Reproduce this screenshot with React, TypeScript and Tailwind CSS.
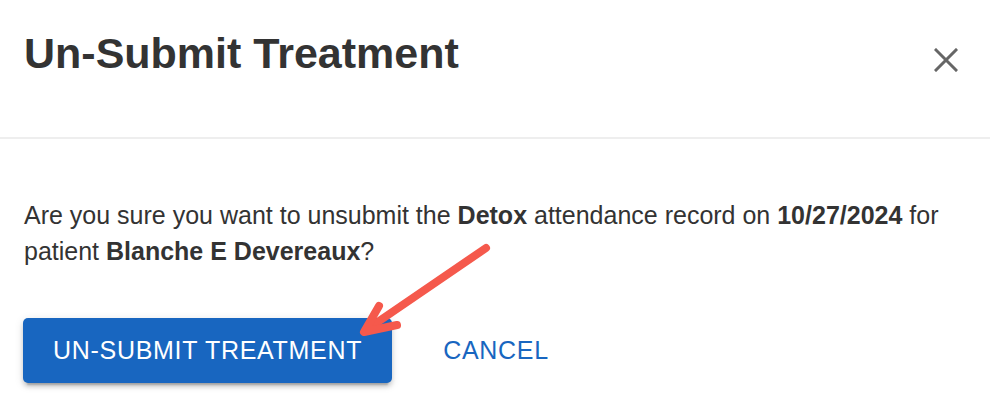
import React from "react";

export default function App() {
  return (
    <div className="relative w-[990px] h-[408px] overflow-hidden bg-white text-[#333333] font-['Liberation_Sans',Arial,sans-serif]">
      {/* Header */}
      <div className="flex h-[139px] items-start justify-between border-b-2 border-[#eeeeee] pl-6 pr-[32px]">
        <h2 className="pt-[32px] text-[43px] font-bold leading-[43px]">Un-Submit Treatment</h2>
        <button type="button" aria-label="Close" className="mt-[48px] text-[#666666]">
          <svg width="24" height="24" viewBox="0 0 24 24" fill="none" stroke="currentColor" strokeWidth="3" strokeLinecap="square">
            <line x1="2" y1="2" x2="22" y2="22" />
            <line x1="22" y1="2" x2="2" y2="22" />
          </svg>
        </button>
      </div>

      {/* Body */}
      <div className="px-6 pt-[58px]">
        <p className="text-[25px] leading-[36px]">
          Are you sure you want to unsubmit the <b>Detox</b> attendance record on <b>10/27/2024</b> for patient{" "}
          <b>Blanche E Devereaux</b>?
        </p>

        <div className="mt-[49px] flex items-center">
          <button
            type="button"
            className="-ml-px h-[65px] rounded-[5px] bg-[#1866c0] px-[30px] text-[25px] uppercase tracking-[0.7px] text-white shadow-[0_6px_2px_-4px_rgba(0,0,0,0.2),0_4px_4px_0_rgba(0,0,0,0.14),0_2px_10px_0_rgba(0,0,0,0.12)]"
          >
            Un-Submit Treatment
          </button>
          <button type="button" className="ml-[51px] text-[25px] uppercase tracking-[0.7px] text-[#1866c0]">
            Cancel
          </button>
        </div>
      </div>

      {/* Annotation arrow */}
      <svg className="pointer-events-none absolute left-0 top-0" width="990" height="408" viewBox="0 0 990 408" fill="none">
        <g stroke="#f5594c" strokeWidth="8" strokeLinecap="round" strokeLinejoin="round">
          <line x1="486" y1="248" x2="366" y2="330" />
          <polyline points="379,306 364,332 397,325" />
        </g>
      </svg>
    </div>
  );
}
